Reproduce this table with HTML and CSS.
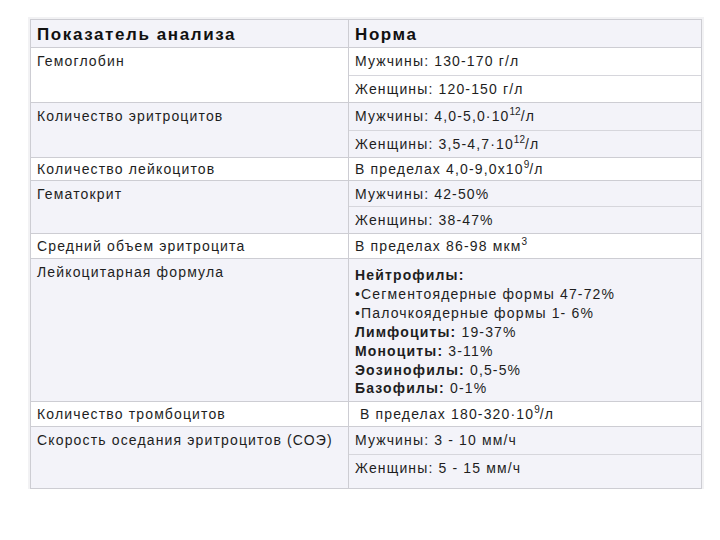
FILE: index.html
```html
<!DOCTYPE html>
<html lang="ru">
<head>
<meta charset="utf-8">
<link rel="stylesheet" href="styles.css">
</head>
<body>
<div class="table">
  <div class="row head alt">
    <div class="left">Показатель анализа</div>
    <div class="right"><div class="sub h27">Норма</div></div>
  </div>
  <div class="row">
    <div class="left">Гемоглобин</div>
    <div class="right">
      <div class="sub h28">Мужчины: 130-170 г/л</div>
      <div class="sub h26">Женщины: 120-150 г/л</div>
    </div>
  </div>
  <div class="row alt">
    <div class="left">Количество эритроцитов</div>
    <div class="right">
      <div class="sub h28">Мужчины: 4,0-5,0·10<sup>12</sup>/л</div>
      <div class="sub h26">Женщины: 3,5-4,7·10<sup>12</sup>/л</div>
    </div>
  </div>
  <div class="row">
    <div class="left tight">Количество лейкоцитов</div>
    <div class="right">
      <div class="sub h22">В пределах 4,0-9,0х10<sup>9</sup>/л</div>
    </div>
  </div>
  <div class="row alt">
    <div class="left">Гематокрит</div>
    <div class="right">
      <div class="sub h26">Мужчины: 42-50%</div>
      <div class="sub h26">Женщины: 38-47%</div>
    </div>
  </div>
  <div class="row">
    <div class="left mid">Средний объем эритроцита</div>
    <div class="right">
      <div class="sub h24">В пределах 86-98 мкм<sup>3</sup></div>
    </div>
  </div>
  <div class="row alt">
    <div class="left">Лейкоцитарная формула</div>
    <div class="right">
      <div class="sub formula">
        <b>Нейтрофилы:</b><br>
        •Сегментоядерные формы 47-72%<br>
        •Палочкоядерные формы 1- 6%<br>
        <b>Лимфоциты:</b> 19-37%<br>
        <b>Моноциты:</b> 3-11%<br>
        <b>Эозинофилы:</b> 0,5-5%<br>
        <b>Базофилы:</b> 0-1%
      </div>
    </div>
  </div>
  <div class="row">
    <div class="left mid">Количество тромбоцитов</div>
    <div class="right">
      <div class="sub h24 indent">В пределах 180-320·10<sup>9</sup>/л</div>
    </div>
  </div>
  <div class="row alt last">
    <div class="left">Скорость оседания эритроцитов (СОЭ)</div>
    <div class="right">
      <div class="sub h28">Мужчины: 3 - 10 мм/ч</div>
      <div class="sub h33">Женщины: 5 - 15 мм/ч</div>
    </div>
  </div>
</div>
</body>
</html>
```

FILE: styles.css
```css
* {
  box-sizing: border-box;
}
html, body {
  margin: 0;
  padding: 0;
  background: #ffffff;
}
body {
  font-family: "Liberation Sans", Arial, sans-serif;
  font-size: 14px;
  letter-spacing: 1.15px;
  color: #1e1e1e;
  padding: 19px 0 0 30px;
}
.table {
  width: 672px;
  border: 1px solid #cdcdd3;
  box-shadow: 0 0 0 2px #f2f2f4;
}
.row {
  display: grid;
  grid-template-columns: 318px 1fr;
  border-bottom: 1px solid #cdcdd3;
  background: #ffffff;
}
.row.alt {
  background: #f3f3f9;
}
.row.last {
  border-bottom: none;
}
.left {
  padding: 4px 6px 0 6px;
  line-height: 19px;
  border-right: 1px solid #cdcdd3;
}
.left.tight {
  padding-top: 2px;
}
.left.mid {
  padding-top: 3px;
}
.right {
  display: flex;
  flex-direction: column;
}
.sub {
  padding: 4px 6px 0 6px;
  line-height: 19px;
  border-bottom: 1px solid #d6d6dc;
}
.sub:last-child {
  border-bottom: none;
}
.head .left, .head .sub {
  font-weight: bold;
  font-size: 17px;
  letter-spacing: 1.6px;
  padding-top: 5px;
  color: #111;
}
.h22 { height: 22px; padding-top: 2px; }
.h24 { height: 24px; padding-top: 3px; }
.h26 { height: 26px; }
.h27 { height: 27px; }
.h28 { height: 28px; }
.h33 { height: 33px; }
.formula {
  height: 142px;
  line-height: 18.9px;
  padding-top: 7px;
}
.formula b {
  font-weight: bold;
}
.indent {
  padding-left: 11px;
}
sup {
  font-size: 10px;
  letter-spacing: 0;
  line-height: 0;
  vertical-align: 6px;
}
```
